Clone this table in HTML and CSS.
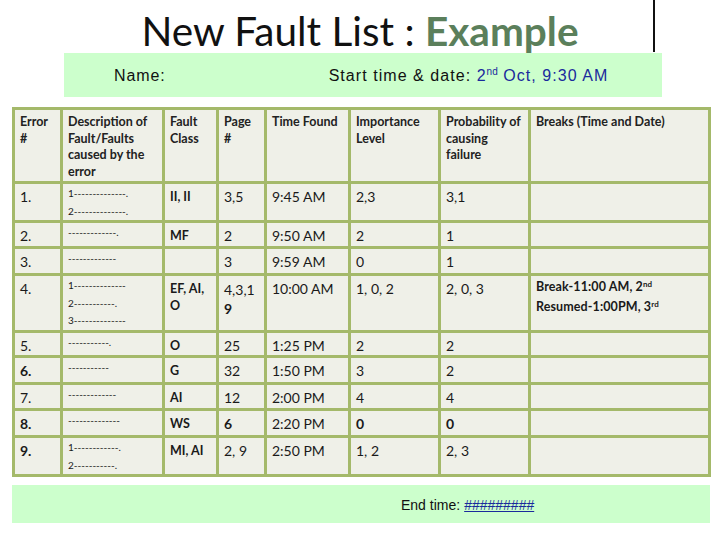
FILE: index.html
```html
<!DOCTYPE html>
<html>
<head>
<meta charset="utf-8">
<link rel="stylesheet" href="styles.css">
</head>
<body>
<div class="page">
  <header class="top">
    <h1 class="title">New Fault List : <b>Example</b></h1>
    <span class="vline"></span>
  </header>
  <div class="namebox">
    <span class="name">Name:</span>
    <span class="start">Start time &amp; date: <span class="blue">2<sup>nd</sup> Oct, 9:30 AM</span></span>
  </div>
  <table class="faults">
    <colgroup>
      <col class="c48"><col class="c102"><col class="c54"><col class="c48">
      <col class="c84"><col class="c90"><col class="c90"><col class="c180">
    </colgroup>
    <tr class="head h74">
      <th>Error #</th><th>Description of Fault/Faults caused by the error</th><th>Fault Class</th><th>Page #</th>
      <th>Time Found</th><th>Importance Level</th><th>Probability of causing failure</th><th>Breaks (Time and Date)</th>
    </tr>
    <tr class="h39">
      <td>1.</td><td class="desc">1--------------.<br>2--------------.</td><td class="fc">II, II</td><td>3,5</td><td>9:45 AM</td><td>2,3</td><td>3,1</td><td></td>
    </tr>
    <tr class="h26">
      <td>2.</td><td class="desc">-------------.</td><td class="fc">MF</td><td>2</td><td>9:50 AM</td><td>2</td><td>1</td><td></td>
    </tr>
    <tr class="h27">
      <td>3.</td><td class="desc">-------------</td><td class="fc"></td><td>3</td><td>9:59 AM</td><td>0</td><td>1</td><td></td>
    </tr>
    <tr class="h57">
      <td>4.</td><td class="desc">1--------------<br>2-----------.<br>3--------------</td><td class="fc">EF, AI,<br>O</td><td class="pg">4,3,1<br><b>9</b></td><td>10:00 AM</td><td>1, 0, 2</td><td>2, 0, 3</td>
      <td class="brk">Break-11:00 AM, 2<sup>nd</sup><br>Resumed-1:00PM, 3<sup>rd</sup></td>
    </tr>
    <tr class="h25">
      <td>5.</td><td class="desc">-----------.</td><td class="fc">O</td><td>25</td><td>1:25 PM</td><td>2</td><td>2</td><td></td>
    </tr>
    <tr class="h27">
      <td><b>6.</b></td><td class="desc">-----------</td><td class="fc">G</td><td>32</td><td>1:50 PM</td><td>3</td><td>2</td><td></td>
    </tr>
    <tr class="h26">
      <td>7.</td><td class="desc">-------------</td><td class="fc">AI</td><td>12</td><td>2:00 PM</td><td>4</td><td>4</td><td></td>
    </tr>
    <tr class="h27">
      <td><b>8.</b></td><td class="desc">--------------</td><td class="fc">WS</td><td><b>6</b></td><td>2:20 PM</td><td><b>0</b></td><td><b>0</b></td><td></td>
    </tr>
    <tr class="h38">
      <td><b>9.</b></td><td class="desc">1------------.<br>2-----------.</td><td class="fc">MI, AI</td><td>2, 9</td><td>2:50 PM</td><td>1, 2</td><td>2, 3</td><td></td>
    </tr>
  </table>
  <div class="endbox">End time: <span class="hash">#########</span></div>
</div>
</body>
</html>
```
FILE: styles.css
```css
html, body { margin: 0; padding: 0; background: #fff; }
.page { width: 720px; height: 540px; position: relative; font-family: Lato, "Open Sans", sans-serif; color: #1a1a1a; }
.top { height: 53px; position: relative; display: flex; justify-content: center; }
.title { margin: 0; padding-top: 8px; font-family: Lato, sans-serif; font-weight: 400; font-size: 40.5px; line-height: 45px; color: #111; }
.title b { color: #5b7f5b; font-weight: 700; }
.vline { position: absolute; left: 653px; top: 0; width: 2px; height: 52px; background: #111; }
.namebox { margin-left: 64px; width: 598px; height: 44px; background: #ccffcc; display: flex; align-items: center; font-family: "Liberation Sans", Arial, sans-serif; font-size: 16px; letter-spacing: 0.9px; color: #111; padding-top: 2px; box-sizing: border-box; }
.name { margin-left: 50px; }
.start { margin-left: 163px; letter-spacing: 1.05px; }
.blue { color: #1a2a9c; }
.namebox sup { font-size: 10px; vertical-align: 6px; line-height: 0; letter-spacing: 0; }
.faults { margin: 10px 0 0 12px; border-collapse: collapse; table-layout: fixed; width: 698px; background: #eff0e8; }
.c48 { width: 48px; }
.c102 { width: 102px; }
.c54 { width: 54px; }
.c84 { width: 84px; }
.c90 { width: 90px; }
.c180 { width: 180px; }
.faults th, .faults td { border: 3px solid #a4b96a; vertical-align: top; text-align: left; padding: 4px 5px 0 5px; font-size: 14px; line-height: 18px; font-weight: 400; }
.faults th { font-size: 12.5px; line-height: 16.5px; font-weight: 700; color: #222; }
.faults td.desc { font-size: 10px; line-height: 17.5px; padding-top: 1px; letter-spacing: 0; }
.faults td.fc { font-size: 12.5px; font-weight: 700; line-height: 17px; }
.faults td.pg { line-height: 19px; }
.faults td.brk { font-size: 12.5px; font-weight: 700; line-height: 20px; padding-top: 1px; letter-spacing: 0.1px; }
.brk sup { font-size: 8px; vertical-align: 4px; line-height: 0; }
.h74 { height: 74px; }
.h39 { height: 39px; }
.h38 { height: 38px; }
.h26 { height: 26px; }
.h25 { height: 25px; }
.h27 { height: 27px; }
.h57 { height: 57px; }
.endbox { margin: 8px 0 0 12px; width: 698px; height: 38px; background: #ccffcc; box-sizing: border-box; padding-left: 389px; padding-top: 2px; display: flex; align-items: center; font-family: "Liberation Sans", Arial, sans-serif; font-size: 14px; color: #111; }
.hash { color: #1a2a9c; text-decoration: underline; margin-left: 4px; }
```
